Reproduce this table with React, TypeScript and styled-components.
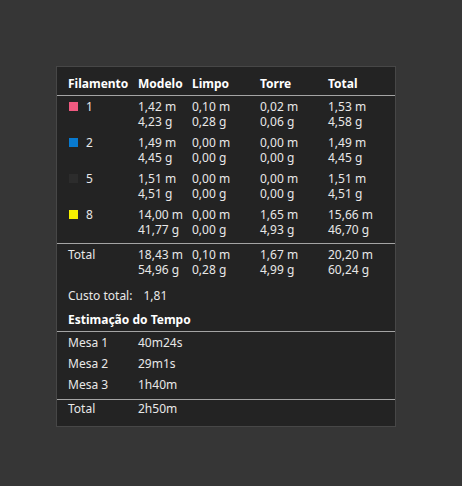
import React from "react";
import styled, { createGlobalStyle } from "styled-components";

const Global = createGlobalStyle`
  html, body { margin: 0; padding: 0; background: #363636; }
  body { font-family: "Noto Sans", "Open Sans", sans-serif; font-size: 12px; color: #e8e8e8; }
`;

const Page = styled.div`
  padding: 66px 0 0 56px;
  min-height: 486px;
  box-sizing: border-box;
`;

const Panel = styled.div`
  width: 340px;
  box-sizing: border-box;
  background: #232323;
  border: 1px solid #474747;
  display: flex;
  flex-direction: column;
  padding-bottom: 8px;
`;

const COLS = "70px 54px 68px 68px 1fr";

const HeaderRow = styled.div`
  display: grid;
  grid-template-columns: ${COLS};
  padding: 9px 0 3px 11px;
  line-height: 16px;
  font-weight: 700;
  color: #ffffff;
`;

const Divider = styled.div`
  height: 1px;
  background: #a4a4a4;
`;

const Block = styled.div<{ $top: number; $bottom: number; $gap?: number }>`
  display: flex;
  flex-direction: column;
  gap: ${(p) => p.$gap ?? 0}px;
  padding: ${(p) => p.$top}px 0 ${(p) => p.$bottom}px 11px;
`;

const DataRow = styled.div`
  display: grid;
  grid-template-columns: ${COLS};
  line-height: 15px;
`;

const Cell = styled.div`
  display: flex;
  flex-direction: column;
  white-space: nowrap;
`;

const FilCell = styled.div`
  display: flex;
  align-items: flex-start;
  gap: 8px;
`;

const Swatch = styled.span<{ $color: string }>`
  width: 9px;
  height: 9px;
  margin-top: 3px;
  margin-left: 1px;
  background: ${(p) => p.$color};
`;

const CostRow = styled.div`
  display: flex;
  gap: 11px;
  line-height: 15px;
`;

const SectionTitle = styled.div`
  font-weight: 700;
  color: #ffffff;
  line-height: 16px;
`;

const TimeRow = styled.div<{ $h: number }>`
  display: grid;
  grid-template-columns: 70px 1fr;
  line-height: ${(p) => p.$h}px;
`;

type Fil = { id: string; color: string; vals: [string, string][] };

const filaments: Fil[] = [
  { id: "1", color: "#ef5a80", vals: [["1,42 m", "4,23 g"], ["0,10 m", "0,28 g"], ["0,02 m", "0,06 g"], ["1,53 m", "4,58 g"]] },
  { id: "2", color: "#087ad0", vals: [["1,49 m", "4,45 g"], ["0,00 m", "0,00 g"], ["0,00 m", "0,00 g"], ["1,49 m", "4,45 g"]] },
  { id: "5", color: "#2c2c2c", vals: [["1,51 m", "4,51 g"], ["0,00 m", "0,00 g"], ["0,00 m", "0,00 g"], ["1,51 m", "4,51 g"]] },
  { id: "8", color: "#f6f000", vals: [["14,00 m", "41,77 g"], ["0,00 m", "0,00 g"], ["1,65 m", "4,93 g"], ["15,66 m", "46,70 g"]] },
];

const totals: [string, string][] = [["18,43 m", "54,96 g"], ["0,10 m", "0,28 g"], ["1,67 m", "4,99 g"], ["20,20 m", "60,24 g"]];

const times = [["Mesa 1", "40m24s"], ["Mesa 2", "29m1s"], ["Mesa 3", "1h40m"]];

const Values = ({ vals }: { vals: [string, string][] }) => (
  <>
    {vals.map(([a, b], i) => (
      <Cell key={i}>
        <span>{a}</span>
        <span>{b}</span>
      </Cell>
    ))}
  </>
);

export default function App() {
  return (
    <Page>
      <Global />
      <Panel>
        <HeaderRow>
          <span>Filamento</span>
          <span>Modelo</span>
          <span>Limpo</span>
          <span>Torre</span>
          <span>Total</span>
        </HeaderRow>
        <Divider />
        <Block $top={3} $bottom={6} $gap={6}>
          {filaments.map((f) => (
            <DataRow key={f.id}>
              <FilCell>
                <Swatch $color={f.color} />
                <span>{f.id}</span>
              </FilCell>
              <Values vals={f.vals} />
            </DataRow>
          ))}
        </Block>
        <Divider />
        <Block $top={3} $bottom={0}>
          <DataRow>
            <span>Total</span>
            <Values vals={totals} />
          </DataRow>
        </Block>
        <Block $top={11} $bottom={0}>
          <CostRow>
            <span>Custo total:</span>
            <span>1,81</span>
          </CostRow>
        </Block>
        <Block $top={9} $bottom={3}>
          <SectionTitle>Estimação do Tempo</SectionTitle>
        </Block>
        <Divider />
        <Block $top={0} $bottom={4}>
          {times.map(([a, b]) => (
            <TimeRow key={a} $h={21}>
              <span>{a}</span>
              <span>{b}</span>
            </TimeRow>
          ))}
        </Block>
        <Divider />
        <Block $top={1} $bottom={1}>
          <TimeRow $h={16}>
            <span>Total</span>
            <span>2h50m</span>
          </TimeRow>
        </Block>
      </Panel>
    </Page>
  );
}
